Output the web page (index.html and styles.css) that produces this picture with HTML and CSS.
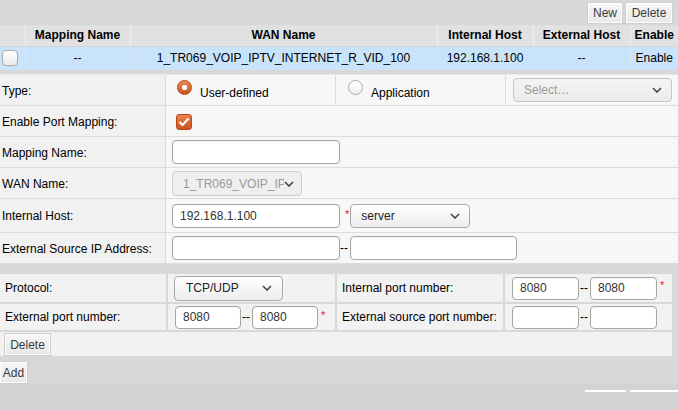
FILE: index.html
```html
<!DOCTYPE html>
<html>
<head>
<meta charset="utf-8">
<link rel="stylesheet" href="styles.css">
</head>
<body>
<div class="toolbar">
  <button class="btn btn-new">New</button>
  <button class="btn btn-del">Delete</button>
</div>
<table class="list">
  <colgroup>
    <col class="c-cb"><col class="c-map"><col class="c-wan"><col class="c-ih"><col class="c-eh"><col class="c-en">
  </colgroup>
  <thead>
    <tr><th></th><th>Mapping Name</th><th>WAN Name</th><th>Internal Host</th><th>External Host</th><th>Enable</th></tr>
  </thead>
  <tbody>
    <tr><td class="cb-cell"><span class="cb"></span></td><td>--</td><td>1_TR069_VOIP_IPTV_INTERNET_R_VID_100</td><td>192.168.1.100</td><td>--</td><td>Enable</td></tr>
  </tbody>
</table>

<div class="form">
  <div class="lbl">Type:</div>
  <div class="val c2"><span class="radio on"></span><span class="rtext">User-defined</span></div>
  <div class="val c3"><span class="radio off"></span><span class="rtext">Application</span></div>
  <div class="val c4"><div class="sel sel-app"><span class="ph">Select…</span><svg class="chev" width="10" height="6" viewBox="0 0 10 6"><path d="M1 1 L5 5 L9 1" fill="none" stroke="#444" stroke-width="1.6"/></svg></div></div>

  <div class="lbl">Enable Port Mapping:</div>
  <div class="val wide pad-cb"><span class="chk"><svg width="12" height="10" viewBox="0 0 12 10"><path d="M1.5 5 L4.5 8 L10.5 1.5" fill="none" stroke="#fff" stroke-width="2"/></svg></span></div>

  <div class="lbl">Mapping Name:</div>
  <div class="val wide"><input class="inp w168" type="text" value=""></div>

  <div class="lbl">WAN Name:</div>
  <div class="val wide"><div class="sel sel-wan disabled"><span class="clip">1_TR069_VOIP_IPTV_INTERNET_R_VID_100</span><svg class="chev" width="10" height="6" viewBox="0 0 10 6"><path d="M1 1 L5 5 L9 1" fill="none" stroke="#444" stroke-width="1.6"/></svg></div></div>

  <div class="lbl tall">Internal Host:</div>
  <div class="val wide tall"><input class="inp w168" type="text" value="192.168.1.100"><span class="req">*</span><div class="sel sel-srv"><span>server</span><svg class="chev" width="10" height="6" viewBox="0 0 10 6"><path d="M1 1 L5 5 L9 1" fill="none" stroke="#444" stroke-width="1.6"/></svg></div></div>

  <div class="lbl">External Source IP Address:</div>
  <div class="val wide"><input class="inp w168" type="text" value=""><span class="dash">--</span><input class="inp w167" type="text" value=""></div>
</div>

<div class="ports">
  <div class="pl r1">Protocol:</div>
  <div class="pv r1"><div class="sel sel-proto"><span>TCP/UDP</span><svg class="chev" width="10" height="6" viewBox="0 0 10 6"><path d="M1 1 L5 5 L9 1" fill="none" stroke="#444" stroke-width="1.6"/></svg></div></div>
  <div class="pl r1">Internal port number:</div>
  <div class="pv r1 right"><input class="inp port" type="text" value="8080"><span class="dash">--</span><input class="inp port" type="text" value="8080"><span class="req">*</span></div>

  <div class="pl">External port number:</div>
  <div class="pv"><input class="inp port" type="text" value="8080"><span class="dash">--</span><input class="inp port" type="text" value="8080"><span class="req">*</span></div>
  <div class="pl">External source port number:</div>
  <div class="pv right"><input class="inp port" type="text" value=""><span class="dash">--</span><input class="inp port" type="text" value=""></div>

  <div class="prow"><button class="btn btn-rowdel">Delete</button></div>
</div>

<div class="addbar"><button class="btn btn-add">Add</button></div>

<div class="footer">
  <button class="fbtn f1"></button>
  <button class="fbtn f2"></button>
</div>
</body>
</html>
```

FILE: styles.css
```css
* { box-sizing: border-box; }
html, body { margin: 0; padding: 0; }
body {
  width: 678px;
  height: 410px;
  overflow: hidden;
  background: #d8d8d8;
  font-family: "Liberation Sans", Arial, sans-serif;
  font-size: 12px;
  color: #000;
}

.btn {
  font-family: "Liberation Sans", Arial, sans-serif;
  font-size: 12px;
  color: #3a3a3a;
  background: linear-gradient(#f6f6f6, #e9e9e9);
  border: 1px solid #fdfdfd;
  box-shadow: 0 0 0 1px #cfcfcf;
  padding: 0;
  margin: 0;
  height: 20px;
  line-height: 18px;
  text-align: center;
}

.toolbar {
  height: 25px;
  display: flex;
  justify-content: flex-end;
  align-items: flex-start;
  gap: 4px;
  padding: 3px 6px 0 0;
}
.btn-new { width: 34px; }
.btn-del { width: 46px; }

/* list table */
.list {
  width: 678px;
  border-collapse: collapse;
  table-layout: fixed;
}
.c-cb { width: 25px; }
.c-map { width: 105px; }
.c-wan { width: 307px; }
.c-ih { width: 96px; }
.c-eh { width: 97px; }
.c-en { width: 48px; }

.list th {
  height: 21px;
  padding: 0;
  background: #e1e1e1;
  font-weight: bold;
  text-align: center;
  border-left: 1px solid #eeeeee;
  border-bottom: 1px solid #d4d4d4;
}
.list th:first-child { border-left: none; }
.list td {
  height: 24px;
  padding: 0;
  background: #c9e4fa;
  text-align: center;
  border-left: 1px solid #d6e8f6;
}
.list td:first-child { border-left: none; }
.list td.cb-cell { text-align: left; padding-left: 2px; }
.cb {
  display: block;
  width: 16px;
  height: 16px;
  border: 1px solid #a9a9a9;
  border-radius: 4px;
  background: linear-gradient(#ffffff, #ececec);
}

/* main form */
.form {
  margin-top: 4px;
  border-top: 1px solid #e8e8e8;
  display: grid;
  grid-template-columns: 166px 170px 170px 172px;
}
.lbl {
  grid-column: 1;
  height: 31px;
  background: #f1f1f1;
  border-right: 1px solid #dcdcdc;
  border-bottom: 1px solid #dcdcdc;
  padding: 1px 0 0 2px;
  display: flex;
  align-items: center;
}
.val {
  height: 31px;
  background: #f7f7f7;
  border-bottom: 1px solid #dcdcdc;
  display: flex;
  align-items: center;
  padding-left: 6px;
}
.val.wide { grid-column: 2 / 5; }
.tall { height: 34px; }
.val.c2 { grid-column: 2; border-right: 1px solid #dcdcdc; padding-left: 11px; }
.val.c3 { grid-column: 3; border-right: 1px solid #dcdcdc; padding-left: 12px; }
.val.c4 { grid-column: 4; padding-left: 7px; }
.val.pad-cb { padding-left: 10px; }

.radio {
  flex: none;
  width: 15px;
  height: 15px;
  border-radius: 50%;
  margin-bottom: 5px;
}
.radio.on {
  background:
    radial-gradient(circle at 50% 50%, #ffffff 0, #ffffff 2.4px, transparent 3px),
    linear-gradient(#ef8b57, #c94f1c);
  border: 1px solid #b9491b;
}
.radio.off {
  background: linear-gradient(#ffffff, #f1f1f1);
  border: 1px solid #a9a9a9;
}
.rtext {
  margin-left: 8px;
  margin-top: 6px;
  line-height: 14px;
}

.chk {
  width: 16px;
  height: 16px;
  border-radius: 3px;
  background: linear-gradient(#ec8450, #cb5220);
  border: 1px solid #b5491b;
  display: flex;
  align-items: center;
  justify-content: center;
  margin-top: 1px;
}

.inp {
  height: 24px;
  border: 1px solid #a6a6a6;
  border-radius: 4px;
  background: #fff;
  box-shadow: inset 0 1px 2px rgba(0,0,0,0.05);
  padding: 0 7px;
  margin: 0;
  font-family: "Liberation Sans", Arial, sans-serif;
  font-size: 12px;
  color: #333;
  outline: none;
}
.w168 { width: 168px; }
.w167 { width: 167px; }
.inp.port { width: 66px; height: 23px; }
.right .inp.port { width: 67px; }

.sel {
  height: 24px;
  border: 1px solid #a8a8a8;
  border-radius: 4px;
  background: linear-gradient(#ffffff, #ececec);
  display: flex;
  align-items: center;
  justify-content: space-between;
  padding: 0 9px 0 10px;
  color: #222;
  overflow: hidden;
}
.sel-app {
  width: 159px;
  border-color: #c6c6c6;
  background: linear-gradient(#f4f4f4, #ebebeb);
}
.sel-app .ph { color: #9a9a9a; }
.sel-wan {
  width: 130px;
  height: 25px;
  margin-top: 1px;
  border-color: #cfcfcf;
  background: #efefef;
  padding: 0 8px 0 10px;
}
.sel-wan .clip {
  color: #9a9a9a;
  white-space: nowrap;
  overflow: hidden;
  width: 101px;
  flex: none;
}
.sel-srv { width: 120px; margin-left: 0; }
.sel-proto { width: 109px; height: 25px; padding-left: 11px; padding-right: 10px; }
.chev { flex: none; }

.req {
  color: #e8202a;
  font-size: 11px;
  align-self: flex-start;
  margin: 9px 1px 0 5px;
  line-height: 12px;
}
.pv .req { margin: 5px 0 0 3px; }
.dash { margin: 0 2px 0 1px; line-height: 14px; }
.val .dash { margin: 0 2px 0 0; }

/* ports */
.ports {
  margin-top: 10px;
  width: 672px;
  display: grid;
  grid-template-columns: 166px 167px 166px 167px;
  grid-template-rows: 28px 26px 24px;
  gap: 2px;
}
.pl {
  background: #f2f2f2;
  display: flex;
  align-items: center;
  padding-left: 5px;
}
.pv {
  background: #f2f2f2;
  display: flex;
  align-items: center;
  padding-left: 7px;
}
.pv.r1 { padding-left: 6px; }
.pv.right { padding-left: 7px; }
.prow {
  grid-column: 1 / -1;
  background: #f2f2f2;
  padding: 2px 0 0 5px;
}
.btn-rowdel { width: 45px; height: 21px; }

.addbar {
  padding-top: 6px;
  height: 27px;
}
.btn-add { width: 27px; height: 21px; }

.footer {
  height: 27px;
  background: #d3d3d3;
  display: flex;
  justify-content: flex-end;
  padding-top: 7px;
  gap: 4px;
}
.fbtn {
  height: 30px;
  padding: 0;
  margin: 0;
  border: none;
  border-top: 2px solid #ffffff;
  background: #d3d3d3;
}
.f1 { width: 41px; }
.f2 { width: 48px; }
```
